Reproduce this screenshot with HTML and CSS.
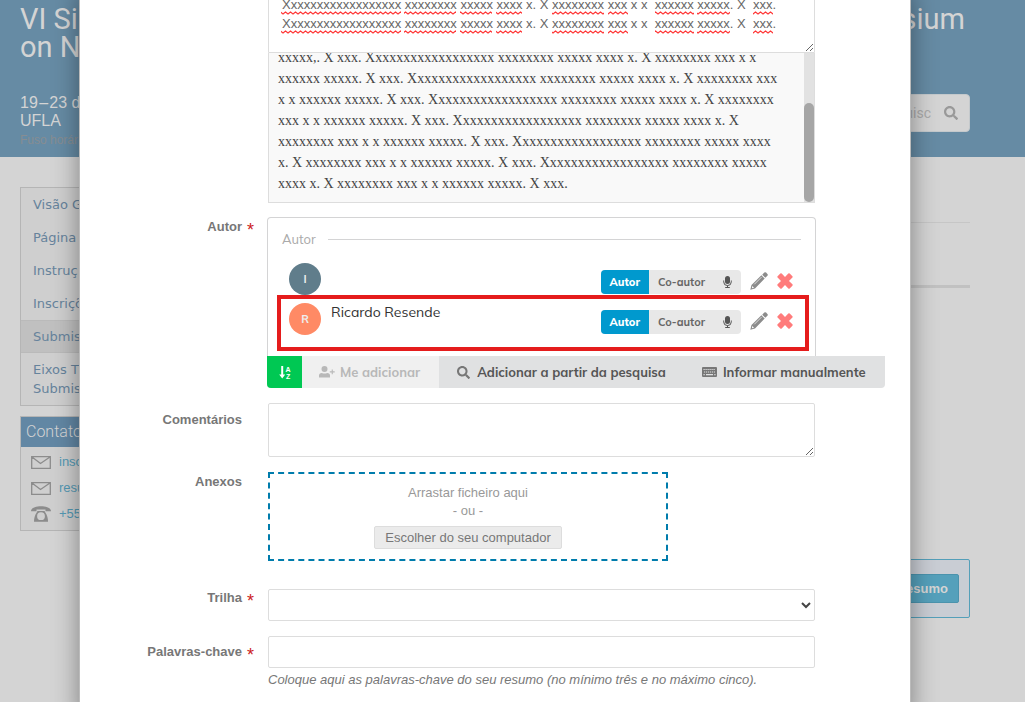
FILE: index.html
```html
<!DOCTYPE html>
<html lang="pt">
<head>
<meta charset="utf-8">
<title>Submissão de resumo</title>
<link rel="stylesheet" href="styles.css">
</head>
<body>
<svg class="defs" aria-hidden="true">
  <defs>
    <symbol id="search" viewBox="0 0 512 512"><path d="M505 442.7L405.3 343c-4.5-4.500-10.600-7-17-7H372c27.600-35.300 44-79.700 44-128C416 93.100 322.900 0 208 0S0 93.100 0 208s93.100 208 208 208c48.300 0 92.700-16.400 128-44v16.300c0 6.400 2.500 12.500 7 17l99.700 99.700c9.400 9.400 24.600 9.400 33.900 0l28.300-28.300c9.400-9.400 9.400-24.600.1-34zM208 336c-70.700 0-128-57.200-128-128 0-70.700 57.200-128 128-128 70.700 0 128 57.200 128 128 0 70.700-57.200 128-128 128z"/></symbol>
    <symbol id="mic" viewBox="0 0 9 12"><rect x="2" y="0" width="5" height="8" rx="2.500"/><path d="M.7 4.500v1.300a3.800 3.800 0 0 0 7.600 0V4.500M4.500 9.500v2M2.200 11.500h4.600" fill="none" stroke="currentColor" stroke-width="1"/></symbol>
    <symbol id="pencil" viewBox="0 0 18 18"><path d="M12.200 2.700 14.300.6q.9-.9 1.800 0l1.300 1.300q.9.9 0 1.800l-2.100 2.100zM11.400 3.300l3.300 3.300-9.700 9.900L.3 17.700l1.200-4.700z"/><path d="m4.300 12.300 7.200-7.200" fill="none" stroke="#fff" stroke-width=".7"/><path d="m2.300 14 1.700 1.700-2.100.5z" fill="#fff"/></symbol>
    <symbol id="cross" viewBox="0 0 16 16"><path d="M3.300.5q.7-.6 1.400 0L8 3.900 11.300.5q.7-.6 1.400 0l2.700 2.700q.6.700 0 1.400L12 8l3.400 3.300q.6.700 0 1.400l-2.700 2.700q-.7.600-1.400 0L8 12.100l-3.300 3.300q-.7.600-1.400 0L.6 12.700q-.6-.7 0-1.400L4 8 .6 4.600q-.6-.7 0-1.400z"/></symbol>
    <symbol id="mail" viewBox="0 0 20 13"><path d="M.7.7h18.600v11.600H.7zM.7.700 9.500 7.500 19.300.7" fill="none" stroke="currentColor" stroke-width="1.300"/></symbol>
    <symbol id="phone" viewBox="0 0 20 16"><path d="M0 5.200C0 1.700 5 .2 10 .2s10 1.500 10 5H14.500V3.600h-9v1.600z"/><path fill-rule="evenodd" d="M6.500 5h7c1 2.200 3.500 4.500 3.500 10.800H3C3 9.500 5.500 7.200 6.500 5zM10 6.300a3.900 3.900 0 1 0 0 7.800 3.900 3.900 0 0 0 0-7.800z"/></symbol>
    <symbol id="adduser" viewBox="0 0 16 12"><circle cx="5.500" cy="3" r="3"/><path d="M0 11.500V9.600Q0 7 2.800 7q2.700 1.200 5.400 0Q11 7 11 9.600v1.900zM12.700 3.500h1.100v1.800h1.900v1.100h-1.900v1.900h-1.100V6.400h-1.900V5.300h1.900z"/></symbol>
    <symbol id="keyboard" viewBox="0 0 15 10"><rect width="15" height="10" rx="1"/><path d="M1.500 2.500h12M2 5h11" stroke="#e0e1e2" stroke-width="1.200" stroke-dasharray="1.200 .8"/><path d="M1.500 7.700h1.200M4 7.700h7M12.300 7.700h1.200" stroke="#e0e1e2" stroke-width="1.200"/></symbol>
    <pattern id="wave" width="5" height="4" patternUnits="userSpaceOnUse"><path d="M-1.500 2 0 3 2.500 1 5 3 7.500 1" fill="none" stroke="#f33" stroke-width="1.200"/></pattern>
  </defs>
</svg>

<div class="page">
  <header class="banner">
    <h1 class="event-title"><span class="title-line"><span>VI Si</span><span>sium</span></span><span class="title-line">on N</span></h1>
    <div class="banner-row">
      <div>
        <p class="event-date">19&#8202;–&#8202;23 d</p>
        <p class="event-date">UFLA</p>
        <p class="timezone">Fuso horár</p>
      </div>
      <div class="search">
        <input class="search-input" type="text" placeholder="uisc" aria-label="Pesquisa">
        <svg class="search-icon"><use href="#search"/></svg>
      </div>
    </div>
  </header>
  <div class="columns">
    <aside class="sidebar">
      <nav class="menu">
        <a class="menu-item" href="#">Visão G</a>
        <a class="menu-item" href="#">Página</a>
        <a class="menu-item" href="#">Instruç</a>
        <a class="menu-item" href="#">Inscriçõ</a>
        <a class="menu-item active" href="#">Submis</a>
        <a class="menu-item" href="#">Eixos T<br>Submis</a>
      </nav>
      <section class="contact">
        <h2 class="contact-title">Contato</h2>
        <a class="contact-item" href="#"><svg class="mail"><use href="#mail"/></svg>insc</a>
        <a class="contact-item" href="#"><svg class="mail"><use href="#mail"/></svg>resu</a>
        <a class="contact-item" href="#"><svg class="phone"><use href="#phone"/></svg>+55</a>
      </section>
    </aside>
    <main class="main">
      <div class="section-title"></div>
      <div class="section-rule"></div>
      <div class="callout"><button class="submit" type="button">esumo</button></div>
    </main>
  </div>
</div>

<form class="dialog">
  <div class="row">
    <span></span>
    <div class="editor">
      <textarea class="abstract" aria-label="Resumo" spellcheck="false">Xxxxxxxxxxxxxxxxxx xxxxxxxx xxxxx xxxx x. X xxxxxxxx xxx x x  xxxxxx xxxxx. X  xxx.
Xxxxxxxxxxxxxxxxxx xxxxxxxx xxxxx xxxx x. X xxxxxxxx xxx x x  xxxxxx xxxxx. X  xxx.</textarea>
      <svg class="spelling" viewBox="0 0 547 24" aria-hidden="true">
        <path id="marks" d="M13 0h120v4H13zM136 0h52v4h-52zM192 0h32v4h-32zM228 0h26v4h-26zM284 0h52v4h-52zM340 0h20v4h-20zM387 0h39v4h-39zM429 0h33v4h-33zM485 0h20v4h-20z"/>
        <use href="#marks" y="19"/>
      </svg>
      <div class="preview">
        <p class="preview-text">xxxxx,. X xxx. Xxxxxxxxxxxxxxxxxx xxxxxxxx xxxxx xxxx x. X xxxxxxxx xxx x x<br>xxxxxx xxxxx. X xxx. Xxxxxxxxxxxxxxxxxx xxxxxxxx xxxxx xxxx x. X xxxxxxxx xxx<br>x x xxxxxx xxxxx. X xxx. Xxxxxxxxxxxxxxxxxx xxxxxxxx xxxxx xxxx x. X xxxxxxxx<br>xxx x x xxxxxx xxxxx. X xxx. Xxxxxxxxxxxxxxxxxx xxxxxxxx xxxxx xxxx x. X<br>xxxxxxxx xxx x x xxxxxx xxxxx. X xxx. Xxxxxxxxxxxxxxxxxx xxxxxxxx xxxxx xxxx<br>x. X xxxxxxxx xxx x x xxxxxx xxxxx. X xxx. Xxxxxxxxxxxxxxxxxx xxxxxxxx xxxxx<br>xxxx x. X xxxxxxxx xxx x x xxxxxx xxxxx. X xxx.</p>
        <div class="track"><div class="thumb"></div></div>
      </div>
    </div>
  </div>

  <div class="row">
    <span class="label required">Autor</span>
    <div class="people">
      <div class="people-list">
        <div class="people-heading">Autor</div>
        <div class="person">
          <span class="avatar slate">I</span>
          <span class="name"></span>
          <div class="roles"><button class="role chosen" type="button">Autor</button><button class="role" type="button">Co-autor</button><button class="role speaker" type="button" aria-label="Apresentador"><svg class="mic"><use href="#mic"/></svg></button></div>
          <button class="tool" type="button" aria-label="Editar"><svg class="pencil"><use href="#pencil"/></svg></button>
          <button class="tool" type="button" aria-label="Remover"><svg class="cross"><use href="#cross"/></svg></button>
        </div>
        <div class="person marked">
          <span class="avatar coral">R</span>
          <span class="name">Ricardo Resende</span>
          <div class="roles"><button class="role chosen" type="button">Autor</button><button class="role" type="button">Co-autor</button><button class="role speaker" type="button" aria-label="Apresentador"><svg class="mic"><use href="#mic"/></svg></button></div>
          <button class="tool" type="button" aria-label="Editar"><svg class="pencil"><use href="#pencil"/></svg></button>
          <button class="tool" type="button" aria-label="Remover"><svg class="cross"><use href="#cross"/></svg></button>
        </div>
      </div>
      <div class="toolbar">
        <button class="bar-button sort" type="button" aria-label="Ordenar"><svg class="sort-icon" viewBox="0 0 12 13"><path d="M2.200 0h2v8.500h2L3.200 12.500.2 8.500h2z"/><text x="6.500" y="6">A</text><text x="7" y="13">Z</text></svg></button>
        <button class="bar-button me" type="button" disabled><svg class="adduser"><use href="#adduser"/></svg>Me adicionar</button>
        <button class="bar-button find" type="button"><svg class="find-icon"><use href="#search"/></svg>Adicionar a partir da pesquisa</button>
        <button class="bar-button manual" type="button"><svg class="keyboard"><use href="#keyboard"/></svg>Informar manualmente</button>
      </div>
    </div>
  </div>

  <div class="row">
    <label class="label" for="comments">Comentários</label>
    <textarea class="field comments" id="comments"></textarea>
  </div>

  <div class="row attachments">
    <span class="label">Anexos</span>
    <div class="dropzone">
      <span>Arrastar ficheiro aqui</span>
      <span>- ou -</span>
      <button class="choose" type="button">Escolher do seu computador</button>
    </div>
  </div>

  <div class="row">
    <label class="label required" for="track">Trilha</label>
    <div class="select-wrap">
      <select class="field" id="track"><option></option></select>
      <svg class="chevron" viewBox="0 0 10 7"><path d="m1 1 4 4 4-4"/></svg>
    </div>
  </div>

  <div class="row">
    <label class="label required keywords" for="keywords">Palavras-chave</label>
    <div>
      <input class="field" id="keywords" type="text">
      <p class="hint">Coloque aqui as palavras-chave do seu resumo (no mínimo três e no máximo cinco).</p>
    </div>
  </div>
</form>
</body>
</html>
```

FILE: styles.css
```css
* { box-sizing: border-box; }
html, body { height: 100%; }
body { margin: 0; position: relative; overflow: hidden; background: #d4d4d4; font: 13px/18px "Liberation Sans", Arial, sans-serif; color: #777; }
h1, h2, p { margin: 0; font-weight: 400; }
button, input, textarea, select { font: inherit; color: inherit; margin: 0; }
button { border: 0; padding: 0; background: none; cursor: pointer; }
a { text-decoration: none; }
svg { display: block; flex: none; fill: currentColor; }
.defs { position: absolute; width: 0; height: 0; }

/* Page behind the dialog */
.banner { background: #668ba4; padding: 5px 55px 7px 20px; color: #d4d4d4; }
.event-title { font: 29px/28px Roboto, sans-serif; }
.title-line { display: flex; justify-content: space-between; padding-right: 5px; }
.banner-row { display: flex; justify-content: space-between; align-items: flex-start; padding-top: 33px; }
.event-date { font-size: 16px; line-height: 18px; }
.timezone { font-size: 12px; line-height: 20px; color: #878d92; }
.search { display: flex; align-items: center; width: 180px; height: 38px; padding-right: 11px; border: 1px solid #c4c9cc; border-radius: 4px; background: #d4d4d4; color: #999; }
.search-input { flex: 1; min-width: 0; border: 0; padding: 0 13px 0 0; background: none; text-align: right; font: 14px/20px Roboto, sans-serif; }
.search-input::placeholder { color: #aaa; }
.search-icon { width: 14px; height: 14px; }
.columns { display: flex; gap: 20px; padding: 30px 55px 0 20px; }
.sidebar { flex: 0 0 200px; display: flex; flex-direction: column; gap: 10px; }
.menu { border: 1px solid #b5b5b5; background: #cfcfcf; }
.menu-item { display: block; padding: 7px 12px; font: 13px/19px "DejaVu Sans", Verdana, sans-serif; color: #66839c; }
.menu-item.active { padding: 6px 12px; border: solid #bababa; border-width: 1px 0; background: #c0c0c0; }
.contact { border: 1px solid #b5b5b5; background: #cfcfcf; padding-bottom: 3px; }
.contact-title { margin-bottom: 2px; padding: 0 5px; background: #6287a4; color: #d4d4d4; font: 300 16px/30px Roboto, sans-serif; }
.contact-item { display: flex; align-items: center; gap: 8px; padding-left: 10px; line-height: 26px; color: #5499b4; }
.mail { width: 20px; height: 13px; color: #8c8c8c; }
.phone { width: 20px; height: 16px; color: #8c8c8c; }
.main { flex: 1; }
.section-title { height: 36px; border-bottom: 1px solid #c6c6c6; }
.section-rule { height: 65px; border-bottom: 3px solid #c1c1c1; }
.callout { display: flex; justify-content: flex-end; margin-top: 271px; padding: 14px 10px; border: 1px solid #549fb9; border-radius: 2px; background: #c9cdd4; }
.submit { height: 29px; padding: 0 10px; border: 1px solid #4b93ad; border-radius: 2px; background: #55a0bb; color: #d4d4d4; font-weight: 700; }

/* Submission dialog */
.dialog { position: absolute; inset: -8px 114px -20px 79px; display: flex; flex-direction: column; gap: 15px; border: 1px solid #bbb; background: #fff; box-shadow: 0 0 24px rgba(0, 0, 0, .4); overflow: hidden; }
.row { display: grid; grid-template-columns: 174px minmax(0, 547px); column-gap: 14px; align-items: start; }
.label { justify-self: end; padding: 8px 12px 0 0; font-weight: 700; }
.required { display: flex; gap: 5px; padding: 0; }
.required::after { content: "*"; width: 7px; height: 18px; color: #c22; font-size: 18px; font-weight: 400; line-height: 25px; }
.keywords { padding-top: 7px; }
.field { display: block; width: 100%; height: 32px; border: 1px solid #ddd; border-radius: 2px; background: #fff; outline: 0; }
.editor { position: relative; }
.abstract { display: block; width: 100%; height: 60px; padding: 1px 13px 0; border: 1px solid #ddd; border-radius: 2px 2px 0 0; background: #fff; color: #666; line-height: 19px; resize: vertical; overflow: hidden; outline: 0; white-space: pre-wrap; }
.spelling { position: absolute; top: 18px; left: 0; width: 547px; height: 24px; fill: url(#wave); pointer-events: none; }
.preview { display: flex; height: 150px; border: solid #ddd; border-width: 0 1px 1px; background: #f9f9f9; overflow: hidden; }
.preview-text { flex: 1; align-self: flex-end; margin-bottom: 8px; padding-left: 9px; white-space: nowrap; font: 14px/21px "Liberation Serif", "Times New Roman", serif; color: #444; }
.track { display: flex; align-items: flex-end; width: 10px; background: #e2e2e2; }
.thumb { width: 10px; height: 99px; border-radius: 5px; background: #a6a6a6; }

/* Author list */
.people { margin: -1px -1px 0; font-family: Mulish, Lato, sans-serif; }
.people-list { border: 1px solid #d4d4d5; border-bottom: 0; border-radius: 4px 4px 0 0; padding: 12px 14px 17px; }
.people-heading { display: flex; align-items: center; gap: 12px; margin-bottom: 11px; font-size: 13px; line-height: 18px; color: #aaa; }
.people-heading::after { content: ""; flex: 1; height: 1px; background: #d4d4d5; }
.person { position: relative; display: flex; align-items: center; height: 40px; padding: 0 8px 0 7px; }
.marked::after { content: ""; position: absolute; inset: -4px -8px -12px -5px; border: 4px solid #e51c1c; pointer-events: none; }
.avatar { display: grid; place-items: center; width: 32px; height: 32px; border-radius: 50%; color: #eee; font-size: 11px; font-weight: 700; }
.slate { background: #607d8b; }
.coral { background: #ff8a65; }
.name { flex: 1; align-self: flex-start; padding: 3px 0 0 10px; color: #333; font-size: 14px; line-height: 20px; }
.roles { display: flex; height: 24px; margin: 6px 9px 0 0; border-radius: 4px; background: #e8e8e8; overflow: hidden; }
.role { padding: 0 9px; font-size: 11px; line-height: 22px; font-weight: 700; color: #666; }
.role.chosen { background: #0099ce; color: #fff; font-weight: 800; }
.speaker { padding: 0 9px; color: #555; }
.mic { width: 9px; height: 12px; }
.tool { margin-top: 4px; color: #8c8c8c; }
.tool + .tool { margin-left: 9px; color: #ff7b7b; }
.pencil { width: 18px; height: 18px; }
.cross { width: 16px; height: 16px; }
.toolbar { display: flex; width: max-content; border-radius: 0 0 4px 4px; overflow: hidden; background: #e0e1e2; color: #555; font-size: 13px; font-weight: 700; }
.bar-button { display: flex; align-items: center; gap: 7px; height: 32px; }
.sort { justify-content: center; width: 35px; background: #00c853; color: #fff; }
.sort-icon { width: 12px; height: 13px; font: 700 7px "Liberation Sans", sans-serif; }
.me { gap: 5px; padding: 0 19px 0 17px; background: #f0f0f0; color: #b8b8b8; }
.adduser { width: 16px; height: 12px; }
.find { padding: 0 18px; }
.find-icon { width: 13px; height: 13px; color: #777; }
.manual { gap: 6px; padding: 0 19px 0 18px; }
.keyboard { width: 15px; height: 10px; color: #777; }

/* Remaining fields */
.comments { height: 54px; resize: vertical; }
.attachments .label { padding-top: 1px; }
.attachments { padding-bottom: 13px; }
.dropzone { display: flex; flex-direction: column; align-items: center; width: 400px; height: 89px; padding-top: 10px; border: 2px dashed #007cac; color: #999; }
.choose { height: 23px; margin-top: 6px; padding: 0 10px; border: 1px solid #ddd; border-radius: 2px; background: #ebebeb; color: #777; }
.select-wrap { position: relative; }
select.field { appearance: none; }
.chevron { position: absolute; top: 13px; right: 4px; width: 10px; height: 7px; fill: none; stroke: #444; stroke-width: 2; pointer-events: none; }
.hint { padding-top: 3px; font-style: italic; }
```
